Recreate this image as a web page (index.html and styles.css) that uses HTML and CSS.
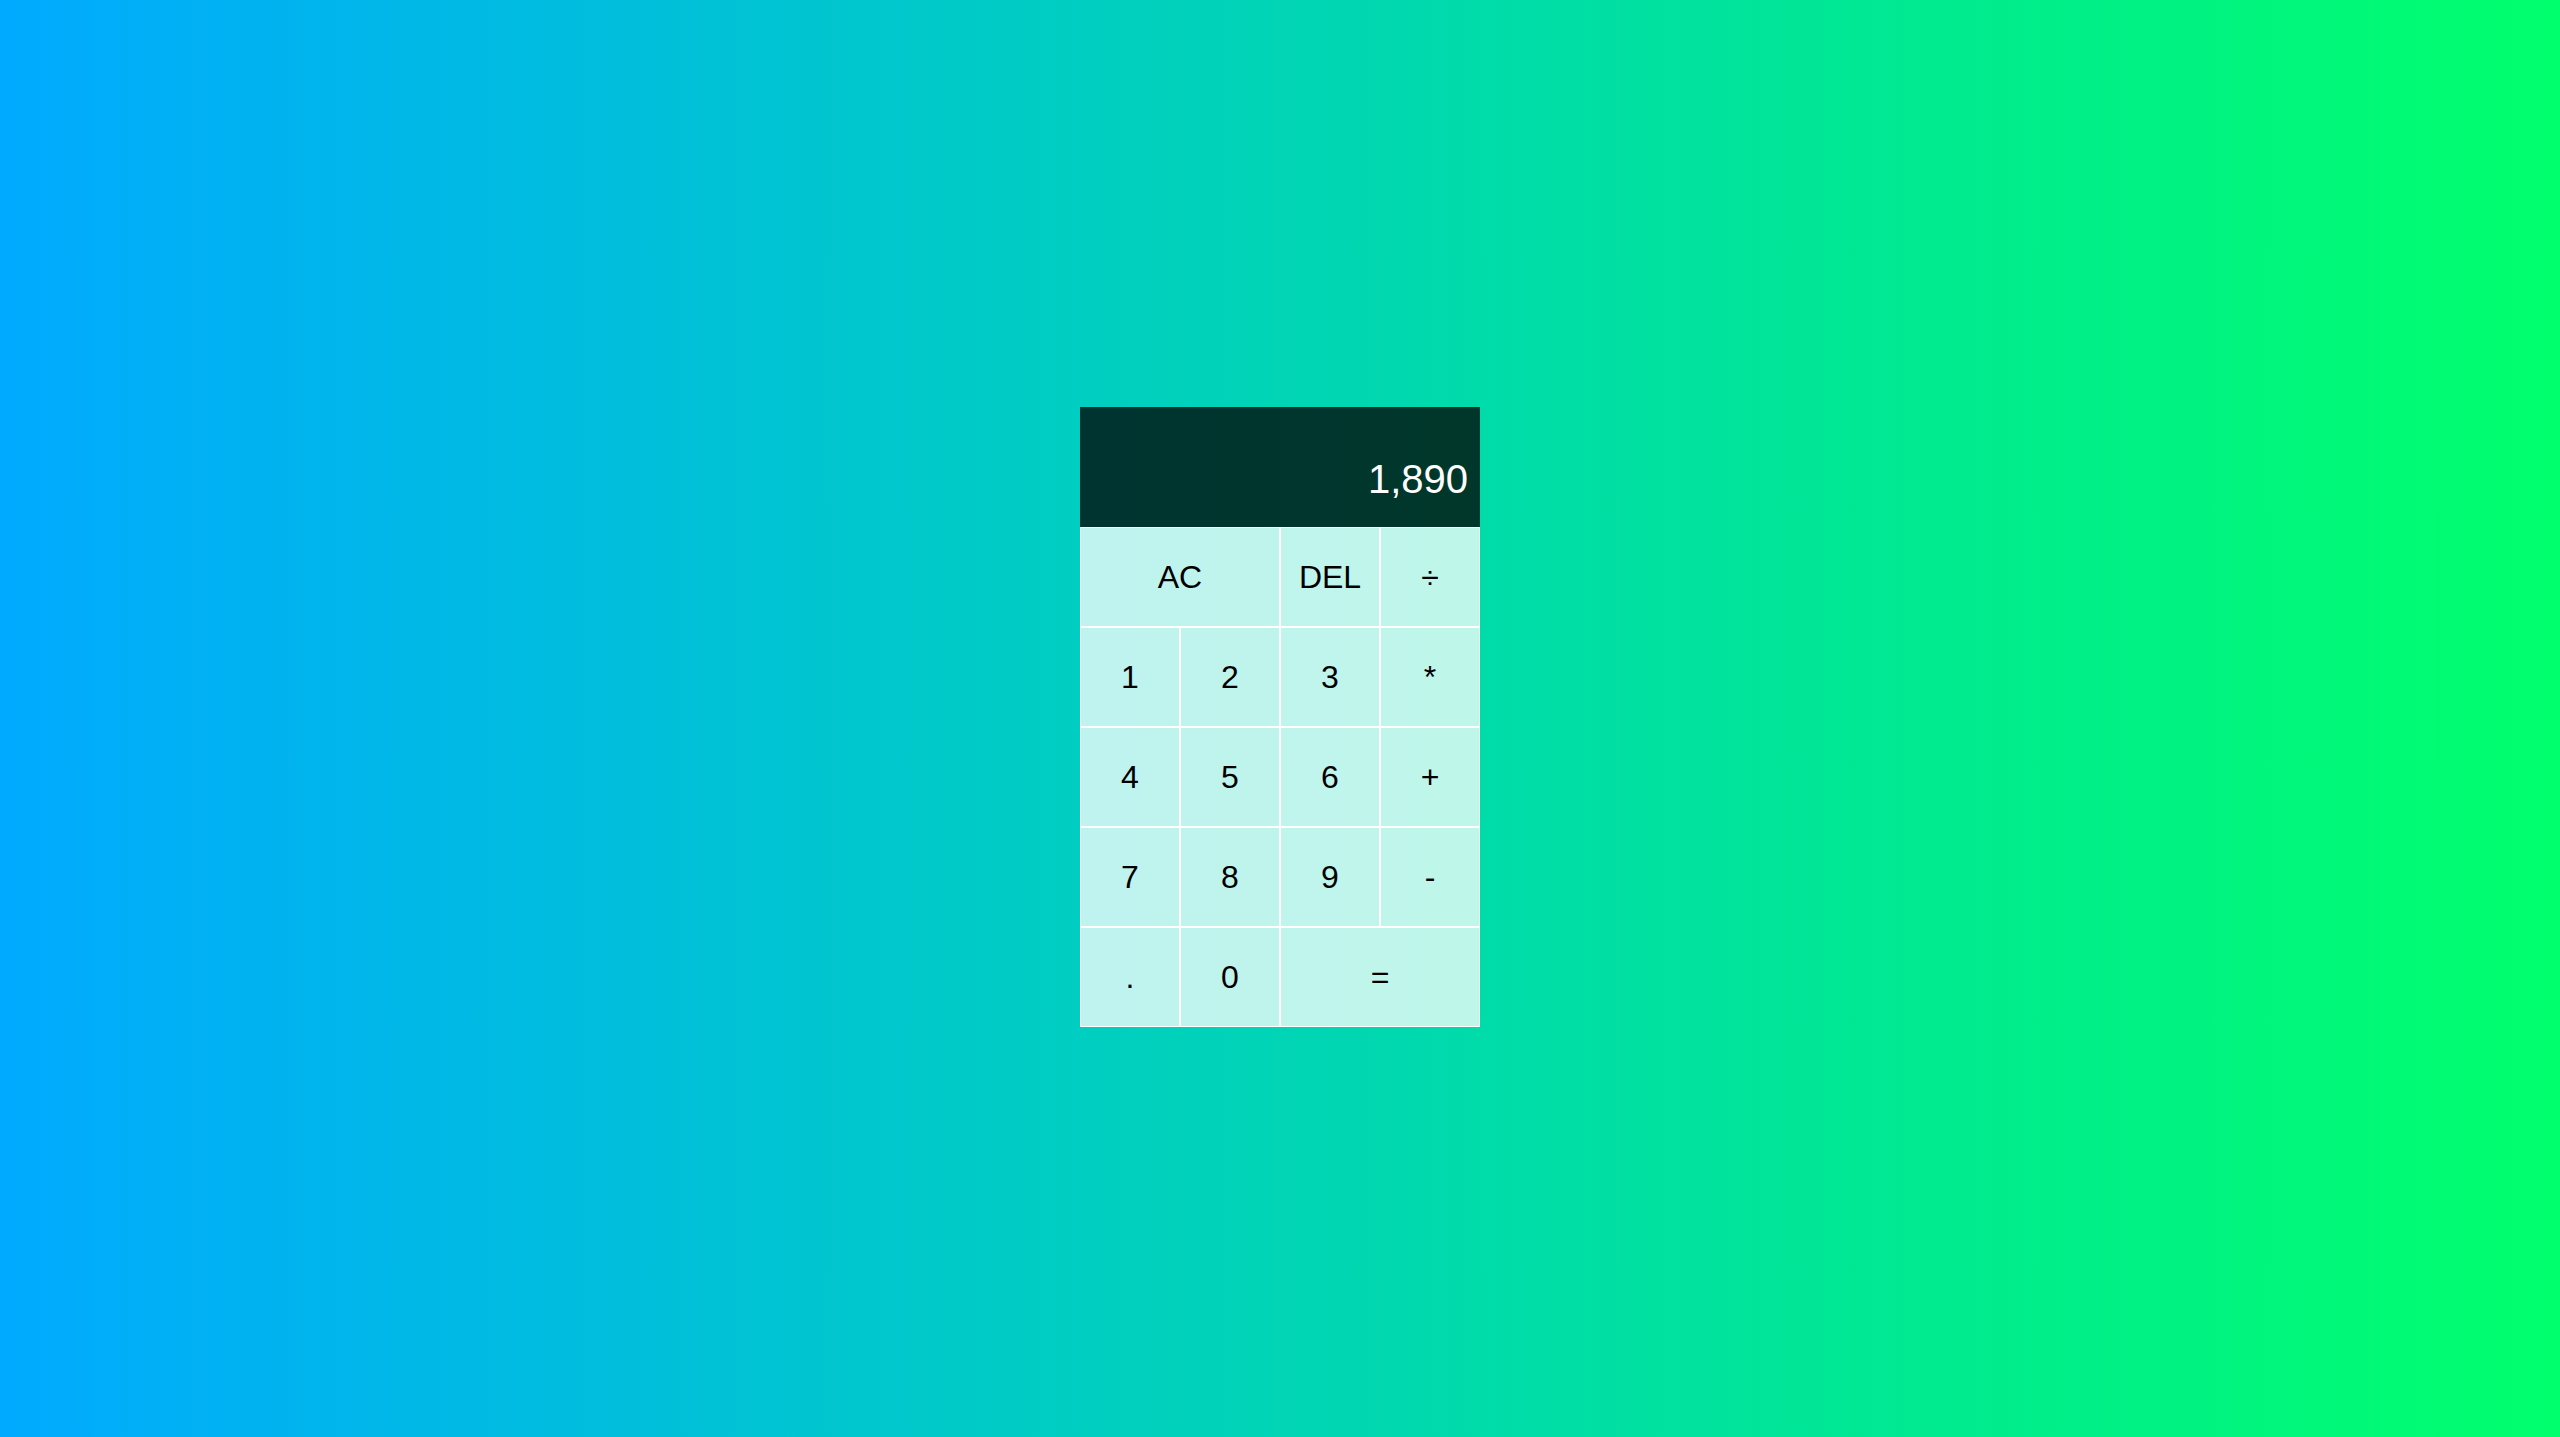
FILE: index.html
```html
<!DOCTYPE html>
<html lang="en">
<head>
<meta charset="utf-8">
<title>Calculator</title>
<link rel="stylesheet" href="styles.css">
</head>
<body>
<div class="calculator-grid">
  <div class="output">
    <div class="previous-operand"></div>
    <div class="current-operand">1,890</div>
  </div>
  <button class="span-two">AC</button>
  <button>DEL</button>
  <button>÷</button>
  <button>1</button>
  <button>2</button>
  <button>3</button>
  <button>*</button>
  <button>4</button>
  <button>5</button>
  <button>6</button>
  <button>+</button>
  <button>7</button>
  <button>8</button>
  <button>9</button>
  <button>-</button>
  <button>.</button>
  <button>0</button>
  <button class="span-two">=</button>
</div>
</body>
</html>
```
FILE: styles.css
```css
*, *::before, *::after {
  box-sizing: border-box;
  font-family: "Liberation Sans", Arial, sans-serif;
  font-weight: normal;
}

body {
  margin: 0;
  padding: 0;
  background: linear-gradient(to right, #00aaff, #00ff6c);
}

.calculator-grid {
  display: grid;
  justify-content: center;
  align-content: center;
  min-height: 100vh;
  padding-bottom: 3px;
  grid-template-columns: repeat(4, 100px);
  grid-template-rows: minmax(120px, auto) repeat(5, 100px);
}

.calculator-grid > button {
  cursor: pointer;
  font-size: 2rem;
  border: 1px solid white;
  outline: none;
  background-color: rgba(255, 255, 255, 0.75);
  color: #000;
  padding: 0;
  margin: 0;
}

.span-two {
  grid-column: span 2;
}

.output {
  grid-column: 1 / -1;
  background-color: rgba(0, 0, 0, 0.75);
  display: flex;
  align-items: flex-end;
  justify-content: space-around;
  flex-direction: column;
  padding: 0.75rem;
  word-wrap: break-word;
  word-break: break-all;
}

.previous-operand {
  color: rgba(255, 255, 255, 0.75);
  font-size: 1.5rem;
}

.current-operand {
  color: white;
  font-size: 2.5rem;
}
```
